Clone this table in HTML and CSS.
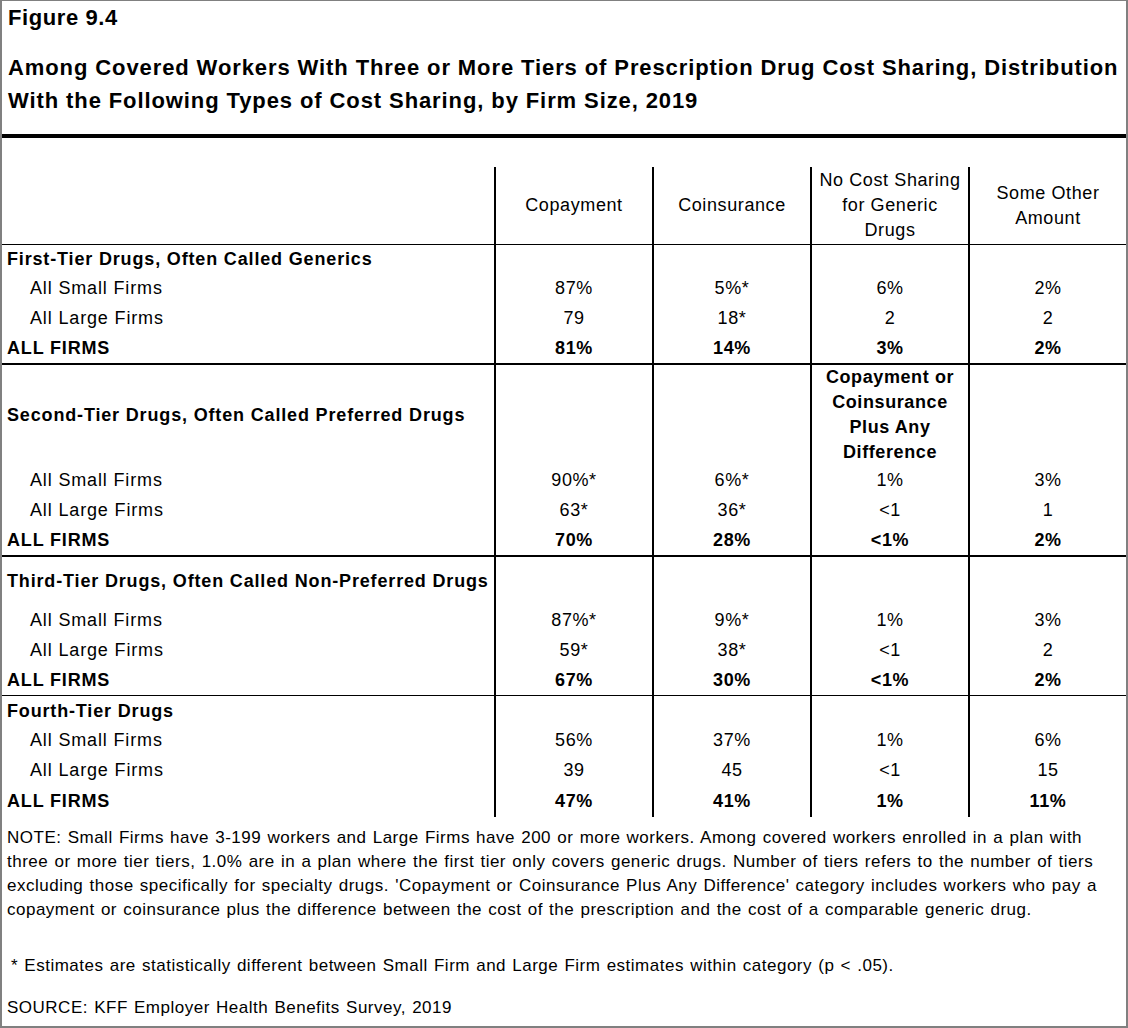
FILE: index.html
```html
<!DOCTYPE html>
<html>
<head>
<meta charset="utf-8">
<link rel="stylesheet" href="styles.css">
</head>
<body>
<div class="frame">
  <div class="titles">
    <div class="fig">Figure 9.4</div>
    <div class="title">Among Covered Workers With Three or More Tiers of Prescription Drug Cost Sharing, Distribution<br>With the Following Types of Cost Sharing, by Firm Size, 2019</div>
  </div>
  <div class="rule"></div>
  <table class="data">
    <colgroup><col class="c1"><col class="cv"><col class="cv"><col class="cv"><col class="cv"></colgroup>
    <tr class="hdr">
      <td></td><td>Copayment</td><td>Coinsurance</td><td>No Cost Sharing<br>for Generic<br>Drugs</td><td>Some Other<br>Amount</td>
    </tr>
    <tr class="sec h28"><td class="lbl">First-Tier Drugs, Often Called Generics</td><td></td><td></td><td></td><td></td></tr>
    <tr class="h30"><td class="sub">All Small Firms</td><td>87%</td><td>5%*</td><td>6%</td><td>2%</td></tr>
    <tr class="h30"><td class="sub">All Large Firms</td><td>79</td><td>18*</td><td>2</td><td>2</td></tr>
    <tr class="tot end2"><td class="lbl">ALL FIRMS</td><td>81%</td><td>14%</td><td>3%</td><td>2%</td></tr>

    <tr class="sec h100"><td class="lbl">Second-Tier Drugs, Often Called Preferred Drugs</td><td></td><td></td><td class="sub-hdr">Copayment or<br>Coinsurance<br>Plus Any<br>Difference</td><td></td></tr>
    <tr class="h30"><td class="sub">All Small Firms</td><td>90%*</td><td>6%*</td><td>1%</td><td>3%</td></tr>
    <tr class="h30"><td class="sub">All Large Firms</td><td>63*</td><td>36*</td><td>&lt;1</td><td>1</td></tr>
    <tr class="tot end2"><td class="lbl">ALL FIRMS</td><td>70%</td><td>28%</td><td>&lt;1%</td><td>2%</td></tr>

    <tr class="sec h48"><td class="lbl">Third-Tier Drugs, Often Called Non-Preferred Drugs</td><td></td><td></td><td></td><td></td></tr>
    <tr class="h30"><td class="sub">All Small Firms</td><td>87%*</td><td>9%*</td><td>1%</td><td>3%</td></tr>
    <tr class="h30"><td class="sub">All Large Firms</td><td>59*</td><td>38*</td><td>&lt;1</td><td>2</td></tr>
    <tr class="tot end1"><td class="lbl">ALL FIRMS</td><td>67%</td><td>30%</td><td>&lt;1%</td><td>2%</td></tr>

    <tr class="sec h29"><td class="lbl">Fourth-Tier Drugs</td><td></td><td></td><td></td><td></td></tr>
    <tr class="h30"><td class="sub">All Small Firms</td><td>56%</td><td>37%</td><td>1%</td><td>6%</td></tr>
    <tr class="h30"><td class="sub">All Large Firms</td><td>39</td><td>45</td><td>&lt;1</td><td>15</td></tr>
    <tr class="tot last"><td class="lbl">ALL FIRMS</td><td>47%</td><td>41%</td><td>1%</td><td>11%</td></tr>
  </table>
  <div class="notes">
    <p class="note">NOTE: Small Firms have 3-199 workers and Large Firms have 200 or more workers. Among covered workers enrolled in a plan with<br>three or more tier tiers, 1.0% are in a plan where the first tier only covers generic drugs. Number of tiers refers to the number of tiers<br>excluding those specifically for specialty drugs. 'Copayment or Coinsurance Plus Any Difference' category includes workers who pay a<br>copayment or coinsurance plus the difference between the cost of the prescription and the cost of a comparable generic drug.</p>
    <p class="star">* Estimates are statistically different between Small Firm and Large Firm estimates within category (p &lt; .05).</p>
    <p class="source">SOURCE: KFF Employer Health Benefits Survey, 2019</p>
  </div>
</div>
</body>
</html>
```

FILE: styles.css
```css
html, body {
  margin: 0;
  padding: 0;
  background: #fff;
}

.frame {
  width: 1124px;
  height: 1025px;
  border-style: solid;
  border-color: #808080;
  border-width: 1px 2px 2px 2px;
  background: #fff;
  font-family: "Liberation Sans", Arial, sans-serif;
  color: #000;
  overflow: hidden;
}

.titles {
  height: 133px;
  box-sizing: border-box;
  padding-left: 6px;
  padding-top: 4px;
}

.fig {
  font-weight: bold;
  font-size: 22px;
  line-height: 26px;
  letter-spacing: 0.6px;
}

.title {
  margin-top: 20px;
  font-weight: bold;
  font-size: 22px;
  line-height: 33px;
  letter-spacing: 0.9px;
  white-space: nowrap;
}

.rule {
  height: 4px;
  background: #000;
}

.data {
  margin-top: 29px;
  width: 1124px;
  table-layout: fixed;
  border-collapse: separate;
  border-spacing: 0;
  font-size: 18px;
  letter-spacing: 0.6px;
}

.c1 { width: 492px; }
.cv { width: 158px; }

.data td {
  padding: 0;
  box-sizing: border-box;
  text-align: center;
  vertical-align: middle;
  white-space: nowrap;
  line-height: 22px;
}

.data td + td {
  border-left: 2px solid #000;
}

.hdr td {
  height: 78px;
  line-height: 25px;
  border-bottom: 1px solid #000;
}

.hdr td:first-child,
.data td.lbl,
.data td.sub {
  text-align: left;
}

.data td.lbl {
  font-weight: bold;
  padding-left: 5px;
  letter-spacing: 0.84px;
}

.data td.sub {
  padding-left: 28px;
  letter-spacing: 0.85px;
}

.tot td {
  font-weight: bold;
}

.sub-hdr {
  font-weight: bold;
}

.data td.sub-hdr {
  line-height: 25px;
}

.h28 td { height: 28px; }
.h29 td { height: 29px; }
.h30 td { height: 30px; }
.h48 td { height: 48px; }
.h100 td { height: 100px; }

.end2 td {
  height: 32px;
  border-bottom: 2px solid #000;
}

.end1 td {
  height: 31px;
  border-bottom: 1px solid #000;
}

.last td {
  height: 32px;
}

.notes {
  padding-left: 5px;
  margin-top: 9px;
  font-size: 17px;
  letter-spacing: 0.5px;
  word-spacing: 1px;
}

.notes p {
  margin: 0;
  white-space: nowrap;
  line-height: 24px;
}

.star {
  margin-top: 32px !important;
  padding-left: 4px;
}

.source {
  margin-top: 18px !important;
}
```
